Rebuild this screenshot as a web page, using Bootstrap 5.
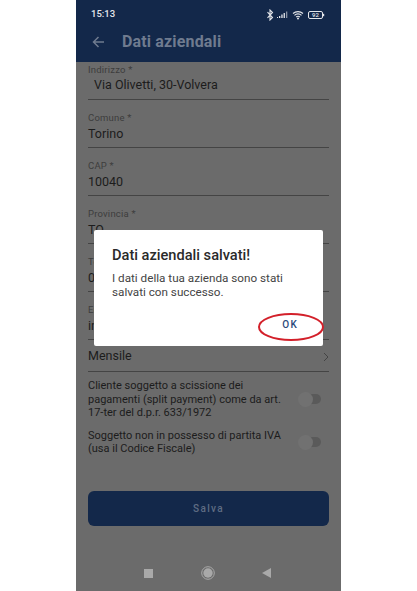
<!DOCTYPE html>
<html lang="it">
<head>
    <meta charset="UTF-8">
    <meta name="viewport" content="width=device-width, initial-scale=1.0">
    <title>Dati aziendali</title>
    <link href="https://cdn.jsdelivr.net/npm/bootstrap@5.3.0/dist/css/bootstrap.min.css" rel="stylesheet">
    <style>
        html, body { height: 100%; }
        body { background: #fff; font-family: Roboto, "Liberation Sans", sans-serif; overflow: hidden; }
        .phone { position: relative; width: 265px; height: 591px; margin-left: 76px; background: #6b6b6b; color: #1c1c1c; overflow: hidden; }
        .top-bar { height: 62px; background: #13284a; color: #e4e6ea; }
        .status-row { height: 26px; padding: 3px 15px 0 15px; font-size: 9.5px; font-weight: 500; }
        .title-row { height: 36px; padding: 0 15px 4px 16px; gap: 17px; }
        .title-text { color: #6f7b8f; font-size: 16px; font-weight: 700; letter-spacing: .15px; }
        .form-area { padding: 0 12px; }
        .field-box { height: 48px; border-bottom: 1px solid #444; padding-top: 13px; }
        .field-box:first-child { height: 38px; padding-top: 3px; }
        .field-label { font-size: 9.5px; line-height: 10px; color: #3d3d3d; letter-spacing: .2px; }
        .field-value { font-size: 12.5px; line-height: 15px; margin-top: 3px; padding-left: 6px; }
        .field-box:first-child .field-value { margin-top: 2px; }
        .field-value.flush { padding-left: 0; }
        .select-row { height: 32px; padding-top: 2px; border-bottom: 1px solid #444; font-size: 12.5px; }
        .switch-row { font-size: 11px; line-height: 13.5px; color: #1c1c1c; }
        .switch-first { margin-top: 7px; }
        .switch-next { margin-top: 9px; }
        .switch-text { width: 205px; }
        .fake-switch { position: relative; width: 20px; height: 10px; border-radius: 5px; background: #5a5a5a; margin-right: 8px; flex-shrink: 0; }
        .fake-switch::before { content: ""; position: absolute; left: -3px; top: -2.500px; width: 15px; height: 15px; border-radius: 50%; background: #717171; }
        .save-btn { display: block; width: 100%; height: 35px; margin-top: 35px; background: #13284a; border: 0; border-radius: 6px; color: #5f6d83; font-size: 10px; font-weight: 500; letter-spacing: 1.300px; padding: 0; }
        .save-btn:hover { background: #13284a; color: #5f6d83; }
        .nav-keys { position: absolute; left: 0; right: 0; bottom: 10px; height: 16px; padding: 0 70px 0 68px; }
        .key-square { width: 9px; height: 9px; background: #a9a9a9; }
        .alert-box { position: absolute; left: 18px; top: 230px; width: 229px; height: 116px; background: #fff; border-radius: 2px; padding: 16px 18px 0 18px; }
        .alert-title { font-size: 14.600px; font-weight: 500; line-height: 18px; color: #2a2a2a; margin: 0 0 7px; }
        .alert-text { font-size: 11.700px; line-height: 14px; color: #444; margin: 0; }
        .alert-ok { position: absolute; right: 25px; bottom: 15px; color: #2c4a7c; font-size: 10px; font-weight: 500; letter-spacing: 1.300px; line-height: 12px; }
        .ok-ring { position: absolute; left: 182px; top: 313px; overflow: visible; }
    </style>
</head>
<body>
    <div class="phone">
        <div class="top-bar">
            <div class="status-row d-flex align-items-center justify-content-between">
                <span>15:13</span>
                <svg width="60" height="12" viewBox="0 0 60 12">
                    <path d="M1.500 3.200l5 5.300L4 11V1l2.500 2.500-5 5.300" fill="none" stroke="#e4e6ea" stroke-width="1.100"/>
                    <rect x="11" y="8" width="1" height="1" fill="#e4e6ea"/>
                    <rect x="13" y="7" width="1.300" height="2" fill="#e4e6ea"/>
                    <rect x="15.300" y="5.500" width="1.300" height="3.500" fill="#e4e6ea"/>
                    <rect x="17.600" y="4" width="1.300" height="5" fill="#e4e6ea"/>
                    <rect x="20" y="2.500" width="1.300" height="6.500" fill="#8b95a6"/>
                    <path d="M27 4.500a7.500 7.500 0 0 1 10 0M28.500 6.300a5 5 0 0 1 7 0M30.200 8a2.500 2.500 0 0 1 3.600 0" fill="none" stroke="#e4e6ea" stroke-width="1.100"/>
                    <circle cx="32" cy="9.500" r="1" fill="#e4e6ea"/>
                    <rect x="42.500" y="2.500" width="14" height="7" rx="1.500" fill="none" stroke="#e4e6ea"/>
                    <rect x="57" y="4.800" width="1.200" height="2.400" fill="#e4e6ea"/>
                    <text x="49.500" y="8.400" font-size="6" text-anchor="middle" fill="#e4e6ea" font-family="Roboto, sans-serif">92</text>
                </svg>
            </div>
            <div class="title-row d-flex align-items-center">
                <svg width="13" height="12" viewBox="0 0 13 12">
                    <path d="M12 6H2M6.500 1L1.500 6l5 5" fill="none" stroke="#6f7b8f" stroke-width="1.500"/>
                </svg>
                <span class="title-text">Dati aziendali</span>
            </div>
        </div>

        <div class="form-area">
            <div class="field-box">
                <div class="field-label">Indirizzo *</div>
                <div class="field-value">Via Olivetti, 30-Volvera</div>
            </div>
            <div class="field-box"><div class="field-label">Comune *</div><div class="field-value flush">Torino</div></div>
            <div class="field-box"><div class="field-label">CAP *</div><div class="field-value flush">10040</div></div>
            <div class="field-box"><div class="field-label">Provincia *</div><div class="field-value flush">TO</div></div>
            <div class="field-box"><div class="field-label">Telefono *</div><div class="field-value flush">011</div></div>
            <div class="field-box"><div class="field-label">Email *</div><div class="field-value flush">info</div></div>
            <div class="select-row d-flex align-items-center justify-content-between">
                <span>Mensile</span>
                <svg width="6" height="10" viewBox="0 0 6 10"><path d="M1 1l4 4-4 4" fill="none" stroke="#444" stroke-width="1"/></svg>
            </div>
            <div class="switch-row switch-first d-flex align-items-center justify-content-between">
                <div class="switch-text">Cliente soggetto a scissione dei pagamenti (split payment) come da art. 17-ter del d.p.r. 633/1972</div>
                <span class="fake-switch"></span>
            </div>
            <div class="switch-row switch-next d-flex align-items-center justify-content-between">
                <div class="switch-text">Soggetto non in possesso di partita IVA (usa il Codice Fiscale)</div>
                <span class="fake-switch"></span>
            </div>
            <button type="button" class="btn save-btn">Salva</button>
        </div>

        <div class="nav-keys d-flex align-items-center justify-content-between">
            <span class="key-square"></span>
            <svg width="14" height="14" viewBox="0 0 14 14">
                <circle cx="7" cy="7" r="6.300" fill="none" stroke="#a9a9a9"/>
                <circle cx="7" cy="7" r="4.700" fill="#a9a9a9"/>
            </svg>
            <svg width="9" height="10" viewBox="0 0 9 10"><path d="M9 0v10L0 5z" fill="#a9a9a9"/></svg>
        </div>

        <div class="alert-box">
            <p class="alert-title">Dati aziendali salvati!</p>
            <p class="alert-text">I dati della tua azienda sono stati salvati con successo.</p>
            <span class="alert-ok">OK</span>
        </div>
        <svg class="ok-ring" width="66" height="28" viewBox="0 0 66 28">
            <ellipse cx="33" cy="14" rx="32" ry="13" fill="none" stroke="#d3202a" stroke-width="2"/>
        </svg>
    </div>
    <script src="https://cdn.jsdelivr.net/npm/bootstrap@5.3.0/dist/js/bootstrap.bundle.min.js"></script>
</body>
</html>
